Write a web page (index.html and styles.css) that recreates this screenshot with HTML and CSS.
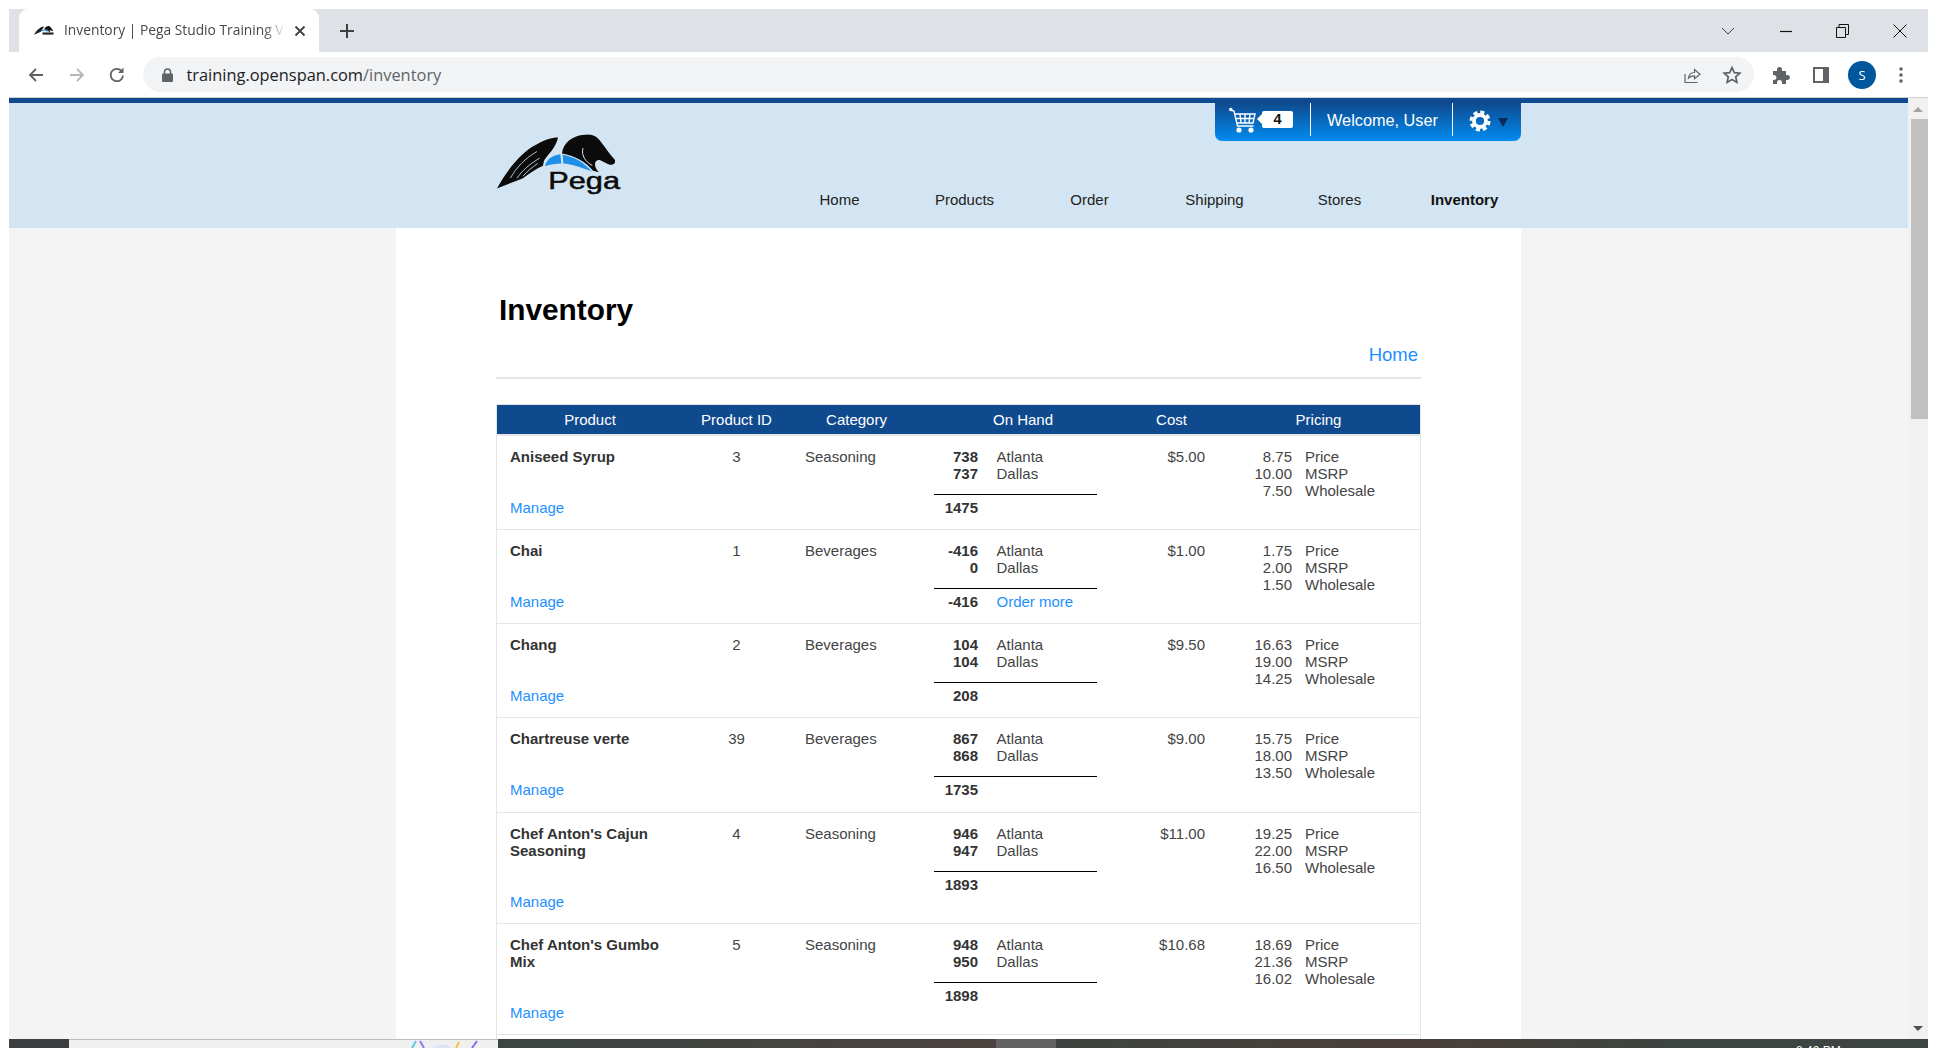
FILE: index.html
```html
<!DOCTYPE html>
<html lang="en">
<head>
    <meta charset="UTF-8">
    <title>Inventory | Pega Studio Training</title>
    <link rel="stylesheet" href="styles.css">
</head>
<body>
    <svg class="defs" width="0" height="0">
        <symbol id="pega-bird" viewBox="50 40 375 185">
            <path fill="#0b0b0b" d="M50 203C85 140 125 92 170 70C190 58 215 50 233 50C228 75 212 92 196 112C190 118 190 125 188 135C165 145 145 160 128 172C100 182 72 195 50 203Z"/>
            <path fill="none" stroke="#d3e5f2" stroke-width="2.500" d="M90 172C108 140 135 112 170 92M110 172C126 148 150 128 178 112M128 166C140 152 155 140 172 128"/>
            <path fill="#1e90e8" d="M194 136C198 114 218 102 240 100L243 128C226 129 210 131 194 136Z"/>
            <path fill="#1e90e8" d="M247 102C282 108 312 126 334 152C305 140 275 130 249 128Z"/>
            <path fill="#0b0b0b" d="M245 98C248 66 278 44 312 42C330 38 346 44 353 53C366 66 384 96 403 116C408 128 398 135 384 130L360 118C350 116 344 122 344 130C344 140 350 148 356 154L338 150C316 122 282 104 245 98Z"/>
            <path fill="none" stroke="#d3e5f2" stroke-width="3" d="M308 82C302 104 316 124 336 134"/>
        </symbol>
    </svg>

    <div class="window">
        <div class="tabstrip">
            <div class="tab">
                <svg class="favicon" width="20" height="10" viewBox="50 40 375 185"><use href="#pega-bird" x="50" y="40" width="375" height="185"/><rect x="210" y="160" width="205" height="40" fill="#222"/></svg>
                <span class="tab-title">Inventory | Pega Studio Training V</span>
                <svg class="tab-close" width="12" height="12" viewBox="0 0 12 12"><path d="M1.5 1.5l9 9M10.5 1.5l-9 9" stroke="#3c4043" stroke-width="1.8"/></svg>
            </div>
            <svg class="new-tab" width="14" height="14" viewBox="0 0 14 14"><path d="M7 0v14M0 7h14" stroke="#3c4043" stroke-width="2"/></svg>
            <div class="spacer"></div>
            <svg class="tab-search" width="14" height="8" viewBox="0 0 14 8"><path d="M1 1l6 6 6-6" fill="none" stroke="#3c4043"/></svg>
            <div class="win-btn"><svg width="12" height="12" viewBox="0 0 12 12"><path d="M0 6.5h12" stroke="#111" stroke-width="1.2"/></svg></div>
            <div class="win-btn"><svg width="13" height="14" viewBox="0 0 13 14"><path d="M.5 3.5h9v10h-9zM3 3.500V.5h9.500v10h-3" fill="none" stroke="#111"/></svg></div>
            <div class="win-btn"><svg width="14" height="14" viewBox="0 0 14 14"><path d="M.5.5l13 13M13.500.5l-13 13" stroke="#111"/></svg></div>
        </div>

        <div class="toolbar">
            <div class="tool-btn"><svg width="16" height="16" viewBox="0 0 16 16"><path d="M15 8H2M8 2L2 8l6 6" fill="none" stroke="#5f6368" stroke-width="1.800"/></svg></div>
            <div class="tool-btn"><svg width="16" height="16" viewBox="0 0 16 16"><path d="M1 8h13M8 2l6 6-6 6" fill="none" stroke="#b4b7ba" stroke-width="1.800"/></svg></div>
            <div class="tool-btn"><svg width="18" height="18" viewBox="0 0 18 18"><path d="M15 9.500A6.200 6.200 0 1 1 13.200 4.600" fill="none" stroke="#5f6368" stroke-width="1.800"/><path d="M15.500 1.500v5.500h-5.500z" fill="#5f6368"/></svg></div>
            <div class="omnibox">
                <svg class="lock" width="11" height="14" viewBox="0 0 11 14"><path d="M2.500 6V4a3 3 0 0 1 6 0v2" fill="none" stroke="#5f6368" stroke-width="1.500"/><rect y="5.500" width="11" height="8.500" rx="1" fill="#5f6368"/></svg>
                <span class="url">training.openspan.com<span class="url-path">/inventory</span></span>
                <div class="spacer"></div>
                <svg class="omni-icon" width="20" height="20" viewBox="0 0 20 20"><path d="M3 9v8.500h12.500M6.500 13C7 9.500 9.500 7.500 12.500 7.500V4.500L18 9.200l-5.500 4.600v-3C10 10.800 8 11.500 6.500 13Z" fill="none" stroke="#5f6368" stroke-width="1.200"/></svg>
                <svg class="omni-icon star" width="20" height="20" viewBox="0 0 20 20"><path d="M10 2.500l2.300 5.100 5.500.6-4.100 3.700 1.200 5.500L10 14.600l-4.900 2.800 1.200-5.500-4.100-3.700 5.500-.6z" fill="none" stroke="#5f6368" stroke-width="1.700"/></svg>
            </div>
            <div class="ext-btn"><svg width="18" height="18" viewBox="0 0 18 18"><path fill="#5f6368" d="M1 5h4V3.500a2.500 2.500 0 0 1 5 0V5h4v4h1.500a2.500 2.500 0 0 1 0 5H14v4h-4v-1.500a2.500 2.500 0 0 0-5 0V18H1v-4h1a2.500 2.500 0 0 0 0-5H1z"/></svg></div>
            <div class="ext-btn"><svg width="16" height="16" viewBox="0 0 16 16"><rect x="1" y="1" width="14" height="14" fill="none" stroke="#5f6368" stroke-width="2"/><rect x="10" y="1" width="5" height="14" fill="#5f6368"/></svg></div>
            <div class="ext-btn"><div class="avatar">S</div></div>
            <div class="ext-btn"><svg width="4" height="16" viewBox="0 0 4 16"><circle cx="2" cy="2" r="1.800" fill="#5f6368"/><circle cx="2" cy="8" r="1.800" fill="#5f6368"/><circle cx="2" cy="14" r="1.800" fill="#5f6368"/></svg></div>
        </div>

        <div class="viewport">
            <div class="page">
                <header class="site-header">
                    <div class="header-inner">
                        <a class="logo">
                            <svg width="125" height="62" viewBox="50 40 375 185">
                                <use href="#pega-bird" x="50" y="40" width="375" height="185"/>
                                <text class="logo-word" x="204" y="205" textLength="215" lengthAdjust="spacingAndGlyphs">Pega</text>
                            </svg>
                        </a>
                        <div class="header-right">
                            <div class="user-bar">
                                <div class="cart">
                                    <svg width="30" height="26" viewBox="0 0 30 26"><path d="M1 3l4 1 3.500 15h16M6 7h20l-2 9H8M11 7l1 9M16 7v9M21 7l-1 9M6.800 11.500h18" fill="none" stroke="#fff" stroke-width="1.400"/><circle cx="1.800" cy="2.500" r="1.800" fill="#fff"/><circle cx="10" cy="23" r="2.600" fill="#fff"/><circle cx="22" cy="23" r="2.600" fill="#fff"/></svg>
                                    <span class="cart-count">4</span>
                                </div>
                                <div class="welcome">Welcome, User</div>
                                <div class="settings">
                                    <svg width="22" height="22" viewBox="0 0 22 22"><circle cx="11" cy="11" r="6" fill="none" stroke="#fff" stroke-width="3.800"/><circle cx="11" cy="11" r="9" fill="none" stroke="#fff" stroke-width="3" stroke-dasharray="4.100 2.970"/></svg>
                                    <span class="caret"></span>
                                </div>
                            </div>
                            <nav class="main-nav">
                                <a>Home</a>
                                <a>Products</a>
                                <a>Order</a>
                                <a>Shipping</a>
                                <a>Stores</a>
                                <a class="active">Inventory</a>
                            </nav>
                        </div>
                    </div>
                </header>

                <main class="content">
                    <h1>Inventory</h1>
                    <div class="home-link"><a>Home</a></div>
                    <div class="inventory">
                        <div class="row head">
                            <div>Product</div>
                            <div>Product ID</div>
                            <div>Category</div>
                            <div>On Hand</div>
                            <div>Cost</div>
                            <div class="head-pricing">Pricing</div>
                        </div>

                        <div class="row">
                            <div class="product"><div class="name">Aniseed Syrup</div><a>Manage</a></div>
                            <div class="pid">3</div>
                            <div class="category">Seasoning</div>
                            <div class="onhand">
                                <div class="stock"><b>738</b><span>Atlanta</span><b>737</b><span>Dallas</span></div>
                                <div class="stock total"><b>1475</b><span></span></div>
                            </div>
                            <div class="cost">$5.00</div>
                            <div class="pricing"><span>8.75</span><span>Price</span><span>10.00</span><span>MSRP</span><span>7.50</span><span>Wholesale</span></div>
                        </div>

                        <div class="row">
                            <div class="product"><div class="name">Chai</div><a>Manage</a></div>
                            <div class="pid">1</div>
                            <div class="category">Beverages</div>
                            <div class="onhand">
                                <div class="stock"><b>-416</b><span>Atlanta</span><b>0</b><span>Dallas</span></div>
                                <div class="stock total"><b>-416</b><a>Order more</a></div>
                            </div>
                            <div class="cost">$1.00</div>
                            <div class="pricing"><span>1.75</span><span>Price</span><span>2.00</span><span>MSRP</span><span>1.50</span><span>Wholesale</span></div>
                        </div>

                        <div class="row">
                            <div class="product"><div class="name">Chang</div><a>Manage</a></div>
                            <div class="pid">2</div>
                            <div class="category">Beverages</div>
                            <div class="onhand">
                                <div class="stock"><b>104</b><span>Atlanta</span><b>104</b><span>Dallas</span></div>
                                <div class="stock total"><b>208</b><span></span></div>
                            </div>
                            <div class="cost">$9.50</div>
                            <div class="pricing"><span>16.63</span><span>Price</span><span>19.00</span><span>MSRP</span><span>14.25</span><span>Wholesale</span></div>
                        </div>

                        <div class="row">
                            <div class="product"><div class="name">Chartreuse verte</div><a>Manage</a></div>
                            <div class="pid">39</div>
                            <div class="category">Beverages</div>
                            <div class="onhand">
                                <div class="stock"><b>867</b><span>Atlanta</span><b>868</b><span>Dallas</span></div>
                                <div class="stock total"><b>1735</b><span></span></div>
                            </div>
                            <div class="cost">$9.00</div>
                            <div class="pricing"><span>15.75</span><span>Price</span><span>18.00</span><span>MSRP</span><span>13.50</span><span>Wholesale</span></div>
                        </div>

                        <div class="row">
                            <div class="product"><div class="name">Chef Anton's Cajun Seasoning</div><a>Manage</a></div>
                            <div class="pid">4</div>
                            <div class="category">Seasoning</div>
                            <div class="onhand">
                                <div class="stock"><b>946</b><span>Atlanta</span><b>947</b><span>Dallas</span></div>
                                <div class="stock total"><b>1893</b><span></span></div>
                            </div>
                            <div class="cost">$11.00</div>
                            <div class="pricing"><span>19.25</span><span>Price</span><span>22.00</span><span>MSRP</span><span>16.50</span><span>Wholesale</span></div>
                        </div>

                        <div class="row">
                            <div class="product"><div class="name">Chef Anton's Gumbo Mix</div><a>Manage</a></div>
                            <div class="pid">5</div>
                            <div class="category">Seasoning</div>
                            <div class="onhand">
                                <div class="stock"><b>948</b><span>Atlanta</span><b>950</b><span>Dallas</span></div>
                                <div class="stock total"><b>1898</b><span></span></div>
                            </div>
                            <div class="cost">$10.68</div>
                            <div class="pricing"><span>18.69</span><span>Price</span><span>21.36</span><span>MSRP</span><span>16.02</span><span>Wholesale</span></div>
                        </div>
                    </div>
                </main>
            </div>
            <div class="scrollbar">
                <div class="arrow-up"></div>
                <div class="thumb"></div>
                <div class="spacer"></div>
                <div class="arrow-down"></div>
            </div>
        </div>

        <div class="taskbar">
            <div class="task-dark"></div>
            <div class="task-search">
                <svg width="70" height="9" viewBox="0 0 70 9"><path d="M2 8l4-7" stroke="#5ac8e8" stroke-width="2"/><path d="M10 1l4 7" stroke="#8a7cf0" stroke-width="2"/><path d="M22 9c4-6 16-6 20 0z" fill="#d8e6f5"/><path d="M46 8l3-6" stroke="#f0c040" stroke-width="2"/><path d="M62 8l5-7" stroke="#7a70f0" stroke-width="2"/></svg>
            </div>
            <div class="task-apps"></div>
            <div class="task-active"></div>
            <div class="task-tray"><span class="clock">8:42 PM</span></div>
        </div>
    </div>
</body>
</html>
```

FILE: styles.css
```css
* {
    box-sizing: border-box;
}
html, body {
    margin: 0;
    height: 1048px;
    overflow: hidden;
    background: #fff;
}
body {
    font-family: "Liberation Sans", Arial, sans-serif;
    font-size: 15px;
    color: #444;
}
a {
    color: #1e90ff;
}
b {
    color: #333;
}
.defs {
    display: block;
    height: 0;
}
.spacer {
    flex: 1;
}

/* browser frame */
.window {
    width: 1919px;
    height: 1048px;
    margin-left: 9px;
    padding-top: 9px;
    display: flex;
    flex-direction: column;
}
.tabstrip {
    height: 43px;
    flex: none;
    background: #dee1e6;
    display: flex;
    align-items: center;
    padding-left: 10px;
}
.tab {
    width: 300px;
    height: 43px;
    background: #fff;
    border-radius: 9px 9px 0 0;
    display: flex;
    align-items: center;
    padding-left: 15px;
    position: relative;
}
.favicon {
    flex: none;
}
.tab-title {
    font-family: "Open Sans", sans-serif;
    font-size: 13.800px;
    color: #45494d;
    margin: -2px 0 0 10px;
    width: 222px;
    white-space: nowrap;
    overflow: hidden;
    -webkit-mask-image: linear-gradient(to right, #000 90%, transparent 100%);
    mask-image: linear-gradient(to right, #000 90%, transparent 100%);
    flex: none;
}
.tab-close {
    margin-left: 8px;
    flex: none;
}
.new-tab {
    margin-left: 21px;
}
.tab-search {
    margin-right: 22px;
}
.win-btn {
    width: 57px;
    height: 36px;
    display: flex;
    align-items: center;
    justify-content: center;
}
.toolbar {
    height: 46px;
    flex: none;
    background: #fff;
    border-bottom: 1px solid #d0d2d5;
    display: flex;
    align-items: center;
    padding: 0 7px;
}
.tool-btn {
    width: 40.500px;
    height: 36px;
    display: flex;
    align-items: center;
    justify-content: center;
}
.omnibox {
    width: 1611px;
    height: 35px;
    margin-left: 6px;
    background: #f1f3f4;
    border-radius: 18px;
    display: flex;
    align-items: center;
    padding: 0 12px 0 19px;
}
.url {
    margin-left: 13px;
    font-family: "Open Sans", sans-serif;
    font-size: 16.400px;
    color: #202124;
}
.url-path {
    color: #5f6368;
}
.omni-icon {
    margin-left: 20px;
}
.ext-btn {
    width: 40px;
    height: 36px;
    display: flex;
    align-items: center;
    justify-content: center;
}
.omnibox + .ext-btn {
    margin-left: 7px;
}
.avatar {
    width: 28px;
    height: 28px;
    margin-left: 2px;
    border-radius: 50%;
    background: #01579b;
    color: #fff;
    font-family: "Open Sans", sans-serif;
    font-size: 13px;
    display: flex;
    align-items: center;
    justify-content: center;
}

/* viewport */
.viewport {
    flex: 1;
    min-height: 0;
    display: flex;
}
.page {
    width: 1899px;
    overflow: hidden;
    background: #f4f4f4;
    border-top: 5px solid #0f4a8f;
}
.scrollbar {
    width: 20px;
    background: #f1f1f1;
    display: flex;
    flex-direction: column;
    align-items: center;
}
.arrow-up {
    margin-top: 9px;
    border-left: 5px solid transparent;
    border-right: 5px solid transparent;
    border-bottom: 5px solid #a3a3a3;
}
.thumb {
    width: 17px;
    height: 300px;
    margin-top: 7px;
    margin-left: 2px;
    background: #c1c1c1;
}
.arrow-down {
    margin-bottom: 8px;
    border-left: 5px solid transparent;
    border-right: 5px solid transparent;
    border-top: 5px solid #505050;
}

/* site header */
.site-header {
    height: 125px;
    background: #d3e5f2;
}
.header-inner {
    width: 1125px;
    margin-left: 387px;
    display: flex;
}
.logo {
    flex: none;
    width: 381px;
    padding: 31px 0 0 101px;
}
.logo svg {
    display: block;
}
.logo-word {
    font-family: "Liberation Sans", sans-serif;
    font-size: 70px;
    fill: #0b0b0b;
    stroke: #0b0b0b;
    stroke-width: 1.500px;
}
.header-right {
    flex: 1;
    min-width: 0;
}
.user-bar {
    width: 306px;
    height: 38px;
    margin-left: auto;
    border-radius: 0 0 7px 7px;
    background: linear-gradient(#0f4a8f, #008cf0);
    display: flex;
    color: #fff;
}
.cart {
    width: 96px;
    height: 33px;
    border-right: 1px solid #fff;
    display: flex;
    align-items: center;
    padding-left: 14px;
}
.cart-count {
    width: 31px;
    height: 17px;
    margin-left: 3px;
    background: #fff;
    color: #111;
    font-weight: bold;
    font-size: 14.500px;
    line-height: 17px;
    text-align: center;
    border-radius: 2px;
    position: relative;
}
.cart-count::before {
    content: "";
    position: absolute;
    left: -5px;
    top: 3px;
    border-top: 5.500px solid transparent;
    border-bottom: 5.500px solid transparent;
    border-right: 5px solid #fff;
}
.welcome {
    width: 142px;
    height: 33px;
    border-right: 1px solid #fff;
    font-size: 16.300px;
    line-height: 34px;
    padding-left: 16px;
    white-space: nowrap;
}
.settings {
    flex: 1;
    height: 36px;
    display: flex;
    align-items: center;
    padding-left: 16px;
}
.caret {
    margin-left: 7px;
    margin-top: 3px;
    border-left: 5px solid transparent;
    border-right: 5px solid transparent;
    border-top: 9px solid #0b2a5c;
}
.main-nav {
    display: grid;
    grid-template-columns: repeat(6, 125px);
    margin-top: 50px;
    line-height: 17px;
    text-align: center;
    white-space: nowrap;
}
.main-nav a {
    color: #222;
}
.main-nav .active {
    color: #111;
    font-weight: bold;
}

/* page body */
.content {
    width: 1125px;
    height: 811px;
    margin-left: 387px;
    background: #fff;
    padding: 64px 100px 0 100px;
}
h1 {
    margin: 0 0 0 3px;
    font-size: 29.800px;
    line-height: 36px;
    color: #000;
}
.home-link {
    height: 36px;
    margin-top: 15px;
    padding-right: 3px;
    border-bottom: 2px solid #e5e5e5;
    text-align: right;
    font-size: 18.500px;
    line-height: 24px;
}
.inventory {
    margin-top: 25px;
    min-height: 640px;
    border: 1px solid #e5e5e5;
    border-bottom: none;
    line-height: 17px;
}
.row {
    display: grid;
    grid-template-columns: 186px 107px 133px 200px 97px 200px;
    border-bottom: 1px solid #e5e5e5;
    padding: 12px 0 13.170px;
}
.head {
    background: #0f4a8f;
    color: #fff;
    text-align: center;
    padding: 0;
    height: 31px;
    line-height: 29px;
    border-bottom: 2px solid #e5e5e5;
}
.head-pricing {
    padding-right: 3px;
}
.product {
    padding-left: 13px;
}
.name {
    max-width: 155px;
    font-weight: bold;
    color: #333;
    margin-bottom: 34px;
}
.pid {
    text-align: center;
}
.category {
    padding-left: 15px;
}
.onhand {
    padding-left: 11px;
}
.stock {
    width: 163px;
    display: grid;
    grid-template-columns: 44px 1fr;
    column-gap: 18.500px;
}
.stock b {
    text-align: right;
}
.total {
    margin-top: 12px;
    padding-top: 4px;
    border-top: 1px solid #000;
}
.cost {
    text-align: right;
    padding-right: 15px;
}
.pricing {
    display: grid;
    grid-template-columns: 72px 1fr;
    column-gap: 13px;
    align-content: start;
}
.pricing span:nth-child(odd) {
    text-align: right;
}

/* desktop taskbar */
.taskbar {
    height: 9px;
    flex: none;
    display: flex;
    overflow: hidden;
    background: #3e4441;
}
.task-dark {
    width: 60px;
    background: #3b3f3f;
}
.task-search {
    width: 429px;
    background: #f0f0f0;
    border-top: 1px solid #bdbdbd;
    padding-left: 341px;
}
.task-search svg {
    display: block;
}
.task-apps {
    width: 498px;
    background: linear-gradient(to right, #3d4543, #4a4340);
}
.task-active {
    width: 60px;
    background: #626262;
}
.task-tray {
    flex: 1;
    padding-left: 740px;
    background: linear-gradient(to right, #3e4441, #4a3f3a 40%, #3e4441 70%);
}
.clock {
    display: block;
    color: #fff;
    font-size: 12px;
    line-height: 12px;
    margin-top: 6px;
    white-space: nowrap;
}
```
